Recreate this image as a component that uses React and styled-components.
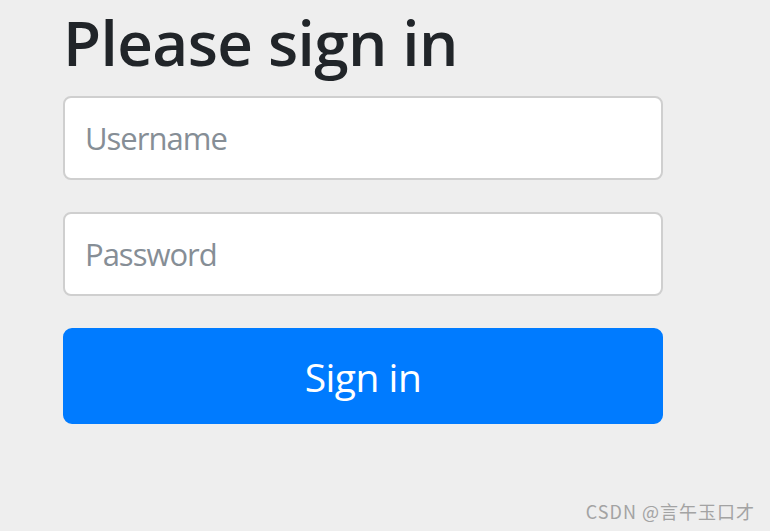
import React from "react";
import styled, { createGlobalStyle } from "styled-components";

const Global = createGlobalStyle`
  html, body { margin: 0; padding: 0; background: #eeeeee; }
  body { font-family: "Open Sans", "Noto Sans", sans-serif; }
  * { box-sizing: border-box; }
`;

const Page = styled.div`
  position: relative;
  min-height: 531px;
  background: #eeeeee;
  padding: 4px 0 0 63px;
`;

const Form = styled.form`
  width: 600px;
  display: flex;
  flex-direction: column;
`;

const Heading = styled.h2`
  margin: 0 0 16px;
  font-family: "Open Sans", "Noto Sans", sans-serif;
  font-size: 62px;
  line-height: 76px;
  font-weight: 600;
  color: #212529;
  letter-spacing: -0.6px;
`;

const Field = styled.p`
  margin: 0 0 32px;
`;

const Input = styled.input`
  display: block;
  width: 100%;
  height: 84px;
  padding: 0 20px;
  border: 2px solid #cfcfcf;
  border-radius: 8px;
  background: #ffffff;
  font-family: "Open Sans", "Noto Sans", sans-serif;
  font-size: 31px;
  letter-spacing: -1px;
  color: #495057;
  outline: none;
  &::placeholder {
    color: #868e96;
    opacity: 1;
  }
`;

const Button = styled.button`
  display: block;
  width: 100%;
  height: 96px;
  border: 2px solid #007bff;
  border-radius: 9px;
  background: #007bff;
  color: #ffffff;
  font-family: "Open Sans", "Noto Sans", sans-serif;
  font-size: 39px;
  letter-spacing: -0.5px;
  font-weight: 400;
  cursor: pointer;
  padding: 0;
`;

const Watermark = styled.div`
  position: absolute;
  right: 15px;
  bottom: 10px;
  font-family: "Noto Sans CJK SC", sans-serif;
  font-size: 18px;
  line-height: 20px;
  letter-spacing: 1px;
  color: #a3a3a3;
  white-space: nowrap;
`;

export default function App() {
  return (
    <>
      <Global />
      <Page>
        <Form onSubmit={(e) => e.preventDefault()}>
          <Heading>Please sign in</Heading>
          <Field>
            <Input type="text" placeholder="Username" />
          </Field>
          <Field>
            <Input type="password" placeholder="Password" />
          </Field>
          <Button type="submit">Sign in</Button>
        </Form>
        <Watermark>CSDN @言午玉口才</Watermark>
      </Page>
    </>
  );
}
